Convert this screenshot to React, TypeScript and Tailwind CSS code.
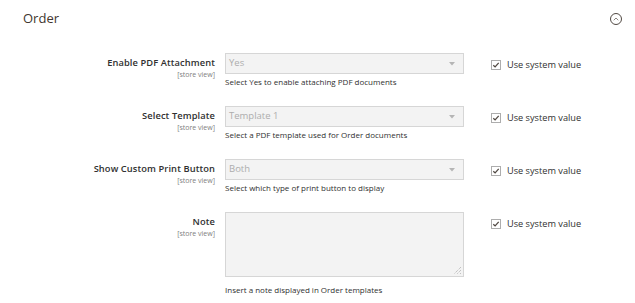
import { ChevronDown } from 'lucide-react';

type Field = {
  label: string;
  value?: string;
  note: string;
  textarea?: boolean;
};

const fields: Field[] = [
  { label: 'Enable PDF Attachment', value: 'Yes', note: 'Select Yes to enable attaching PDF documents' },
  { label: 'Select Template', value: 'Template 1', note: 'Select a PDF template used for Order documents' },
  { label: 'Show Custom Print Button', value: 'Both', note: 'Select which type of print button to display' },
  { label: 'Note', note: 'Insert a note displayed in Order templates', textarea: true },
];

function SystemCheckbox() {
  return (
    <label className="flex items-center gap-[6px] pt-[6px] text-[9.2px] leading-[12px] text-[#303030]">
      <span className="flex h-[10px] w-[10px] items-center justify-center border border-[#adadad] bg-white">
        <svg width="8" height="8" viewBox="0 0 8 8" fill="none">
          <path d="M1.3 4.2 L3.1 5.9 L6.7 1.9" stroke="#514943" strokeWidth="1.3" />
        </svg>
      </span>
      Use system value
    </label>
  );
}

function FieldRow({ field }: { field: Field }) {
  return (
    <div className="flex">
      {/* Label */}
      <div className="w-[215px] shrink-0 pt-[4px] text-right">
        <div className="text-[9.3px] font-semibold leading-[12px] tracking-[0.1px] text-[#303030]">{field.label}</div>
        <div className="mt-[2px] text-[7px] leading-[8px] text-[#808080]">[store view]</div>
      </div>

      {/* Control */}
      <div className="ml-[10px] w-[239px] shrink-0">
        {field.textarea ? (
          <div className="relative h-[65px] border border-[#d6d6d6] bg-[#f3f3f3]">
            <svg className="absolute bottom-[1px] right-[1px]" width="9" height="9" viewBox="0 0 9 9">
              <path d="M8 1 L1 8 M8 4 L4 8 M8 7 L7 8" stroke="#9a9a9a" strokeWidth="0.8" strokeDasharray="1 1" />
            </svg>
          </div>
        ) : (
          <div className="flex h-[21px] items-center justify-between border border-[#d6d6d6] bg-[#f3f3f3] pl-[3px] pr-[8px]">
            <span className="text-[9.5px] text-[#adadad]">{field.value}</span>
            <svg width="6" height="4" viewBox="0 0 6 4">
              <path d="M0 0 H6 L3 3.5 Z" fill="#b5b5b5" />
            </svg>
          </div>
        )}
        <div className={`${field.textarea ? 'mt-[7px]' : 'mt-[2px]'} text-[8px] leading-[12px] text-[#303030]`}>
          {field.note}
        </div>
      </div>

      {/* Use system value */}
      <div className="ml-[27px]">
        <SystemCheckbox />
      </div>
    </div>
  );
}

export default function App() {
  return (
    <div className="h-[303px] w-[635px] bg-white" style={{ fontFamily: '"Open Sans", sans-serif' }}>
      {/* Section header */}
      <div className="flex h-[38px] items-center justify-between pl-[23px] pr-[13px]">
        <h2 className="text-[13px] font-normal text-[#41362f]">Order</h2>
        <span className="flex h-[12px] w-[12px] items-center justify-center rounded-full border border-[#514943]">
          <ChevronDown className="rotate-180 text-[#514943]" size={8} strokeWidth={2} />
        </span>
      </div>

      {/* Fields */}
      <div className="mt-[15px] flex flex-col gap-[18px]">
        {fields.map((f) => (
          <FieldRow key={f.label} field={f} />
        ))}
      </div>
    </div>
  );
}
